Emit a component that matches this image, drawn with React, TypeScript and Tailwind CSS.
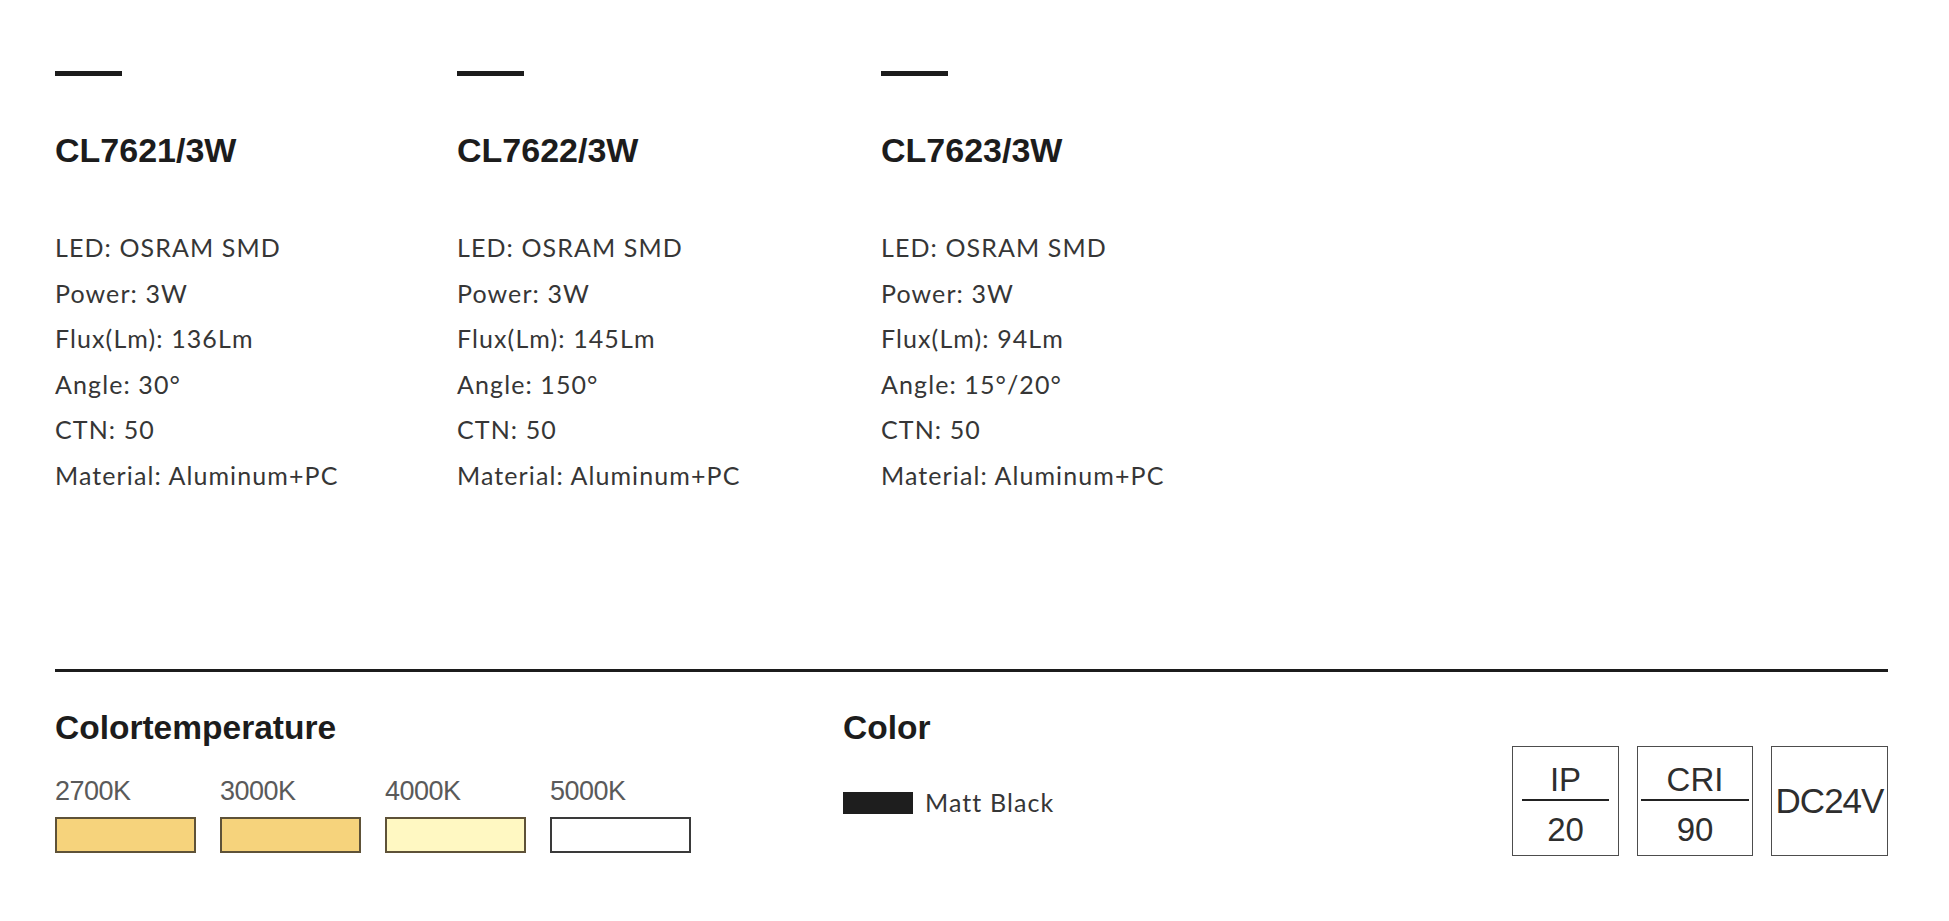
const products = [
  {
    code: "CL7621/3W",
    width: "w-[402px]",
    specs: ["LED: OSRAM SMD", "Power: 3W", "Flux(Lm): 136Lm", "Angle: 30°", "CTN: 50", "Material: Aluminum+PC"],
  },
  {
    code: "CL7622/3W",
    width: "w-[424px]",
    specs: ["LED: OSRAM SMD", "Power: 3W", "Flux(Lm): 145Lm", "Angle: 150°", "CTN: 50", "Material: Aluminum+PC"],
  },
  {
    code: "CL7623/3W",
    width: "w-[424px]",
    specs: ["LED: OSRAM SMD", "Power: 3W", "Flux(Lm): 94Lm", "Angle: 15°/20°", "CTN: 50", "Material: Aluminum+PC"],
  },
];

// colour temperature swatches
const temps = [
  { label: "2700K", swatch: "bg-[#f6d37c] border-[#5e5238]" },
  { label: "3000K", swatch: "bg-[#f6d37c] border-[#5e5238]" },
  { label: "4000K", swatch: "bg-[#fff8c2] border-[#5e5238]" },
  { label: "5000K", swatch: "bg-white border-[#3a3a3a]" },
];

const geo = "font-['Lato','Open_Sans',sans-serif]";
const helv = "font-['Liberation_Sans',Arial,sans-serif]";

function ProductColumn({ code, width, specs }: { code: string; width: string; specs: string[] }) {
  return (
    <div className={width}>
      <div className="h-[5px] w-[67px] bg-[#1c1c1c]" />
      <h2 className={`${helv} mt-[57px] text-[34px] leading-none font-bold text-[#1c1c1c]`}>{code}</h2>
      <ul className={`${geo} mt-[58px] text-[25px] leading-[45.6px] tracking-[1.1px] text-[#363636]`}>
        {specs.map((s) => (
          <li key={s}>{s}</li>
        ))}
      </ul>
    </div>
  );
}

function RatingBox({ top, bottom, wide }: { top: string; bottom: string; wide?: boolean }) {
  return (
    <div
      className={`${helv} flex h-[110px] flex-col items-center border border-[#4d4d4d] pt-[16px] text-[33px] leading-none text-[#2e2e2e] ${
        wide ? "w-[116px] px-[3px]" : "w-[107px] px-[9px]"
      }`}
    >
      <span>{top}</span>
      <div className="mt-[3px] h-[2px] w-full bg-[#222]" />
      <span className="mt-[12px]">{bottom}</span>
    </div>
  );
}

export default function App() {
  return (
    <div className="min-h-screen bg-white pt-[71px] pl-[55px]">
      {/* product columns */}
      <div className="flex">
        {products.map((p) => (
          <ProductColumn key={p.code} {...p} />
        ))}
      </div>

      <div className="mt-[170px] h-[3px] w-[1833px] bg-[#1c1c1c]" />

      {/* bottom info row */}
      <div className="flex w-[1833px] items-start">
        <div className="w-[788px]">
          <h3 className={`${helv} mt-[39px] text-[33.5px] leading-none font-bold text-[#1c1c1c]`}>Colortemperature</h3>
          <div className="mt-[34px] flex gap-[24px]">
            {temps.map((t) => (
              <div key={t.label} className="w-[141px]">
                <div className={`${helv} text-[27px] leading-none tracking-[-0.5px] text-[#5a5a5a]`}>{t.label}</div>
                <div className={`mt-[12px] h-[36px] border-2 ${t.swatch}`} />
              </div>
            ))}
          </div>
        </div>

        <div>
          <h3 className={`${helv} mt-[39px] text-[33.5px] leading-none font-bold text-[#1c1c1c]`}>Color</h3>
          <div className="mt-[46px] flex items-center gap-[12px]">
            <div className="h-[22px] w-[70px] bg-[#1e1e1e]" />
            <span className={`${geo} text-[25px] leading-[25px] tracking-[1.1px] text-[#363636]`}>Matt Black</span>
          </div>
        </div>

        <div className="ml-auto mt-[74px] flex gap-[18px]">
          <RatingBox top="IP" bottom="20" />
          <RatingBox top="CRI" bottom="90" wide />
          <div
            className={`${helv} flex h-[110px] w-[117px] items-center justify-center border border-[#4d4d4d] text-[35px] leading-none tracking-[-1px] text-[#2e2e2e]`}
          >
            DC24V
          </div>
        </div>
      </div>
    </div>
  );
}
